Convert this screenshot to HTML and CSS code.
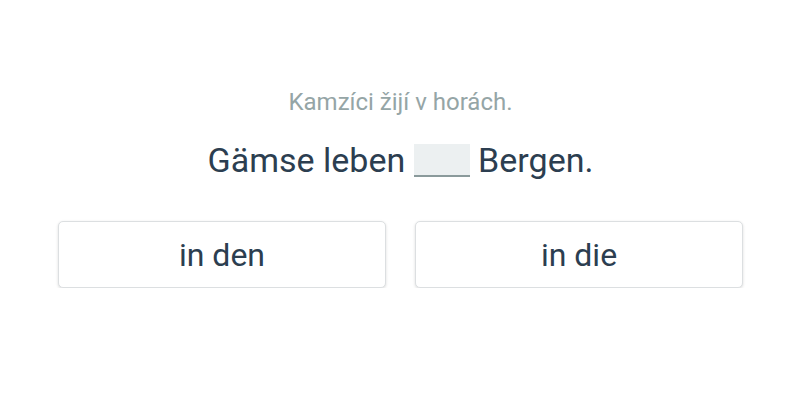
FILE: index.html
```html
<!DOCTYPE html>
<html lang="cs">
<head>
    <meta charset="UTF-8">
    <meta name="viewport" content="width=device-width, initial-scale=1.0">
    <title>Exercise</title>
    <link rel="stylesheet" href="styles.css">
</head>
<body>
    <div class="exercise">
        <p class="hint">Kamzíci žijí v horách.</p>
        <p class="sentence">Gämse leben <span class="blank"></span> Bergen.</p>
        <div class="choices">
            <button class="choice">in den</button>
            <button class="choice">in die</button>
        </div>
    </div>
</body>
</html>
```

FILE: styles.css
```css
body {
    margin: 0;
    background-color: #fff;
    font-family: Roboto, "Liberation Sans", sans-serif;
    color: #2c3e50;
}
.exercise {
    padding: 86px 57px 0 58px;
}
.hint {
    margin: 0;
    text-align: center;
    font-size: 24px;
    line-height: 32px;
    color: #95a5a6;
}
.sentence {
    margin: 22px 0 0;
    text-align: center;
    font-size: 34px;
    line-height: 40px;
}
.blank {
    display: inline-block;
    width: 56px;
    height: 31px;
    vertical-align: -5px;
    background-color: #ecf0f1;
    border-bottom: 2px solid #8a9a9b;
}
.choices {
    display: grid;
    grid-template-columns: 1fr 1fr;
    gap: 29px;
    margin-top: 41px;
}
.choice {
    height: 67px;
    padding: 0;
    font-family: inherit;
    font-size: 32px;
    color: #2c3e50;
    background-color: #fff;
    border: 1px solid #dcdfe1;
    border-radius: 5px;
    box-shadow: 0 1px 3px rgba(0, 0, 0, 0.14);
    cursor: pointer;
}
```
